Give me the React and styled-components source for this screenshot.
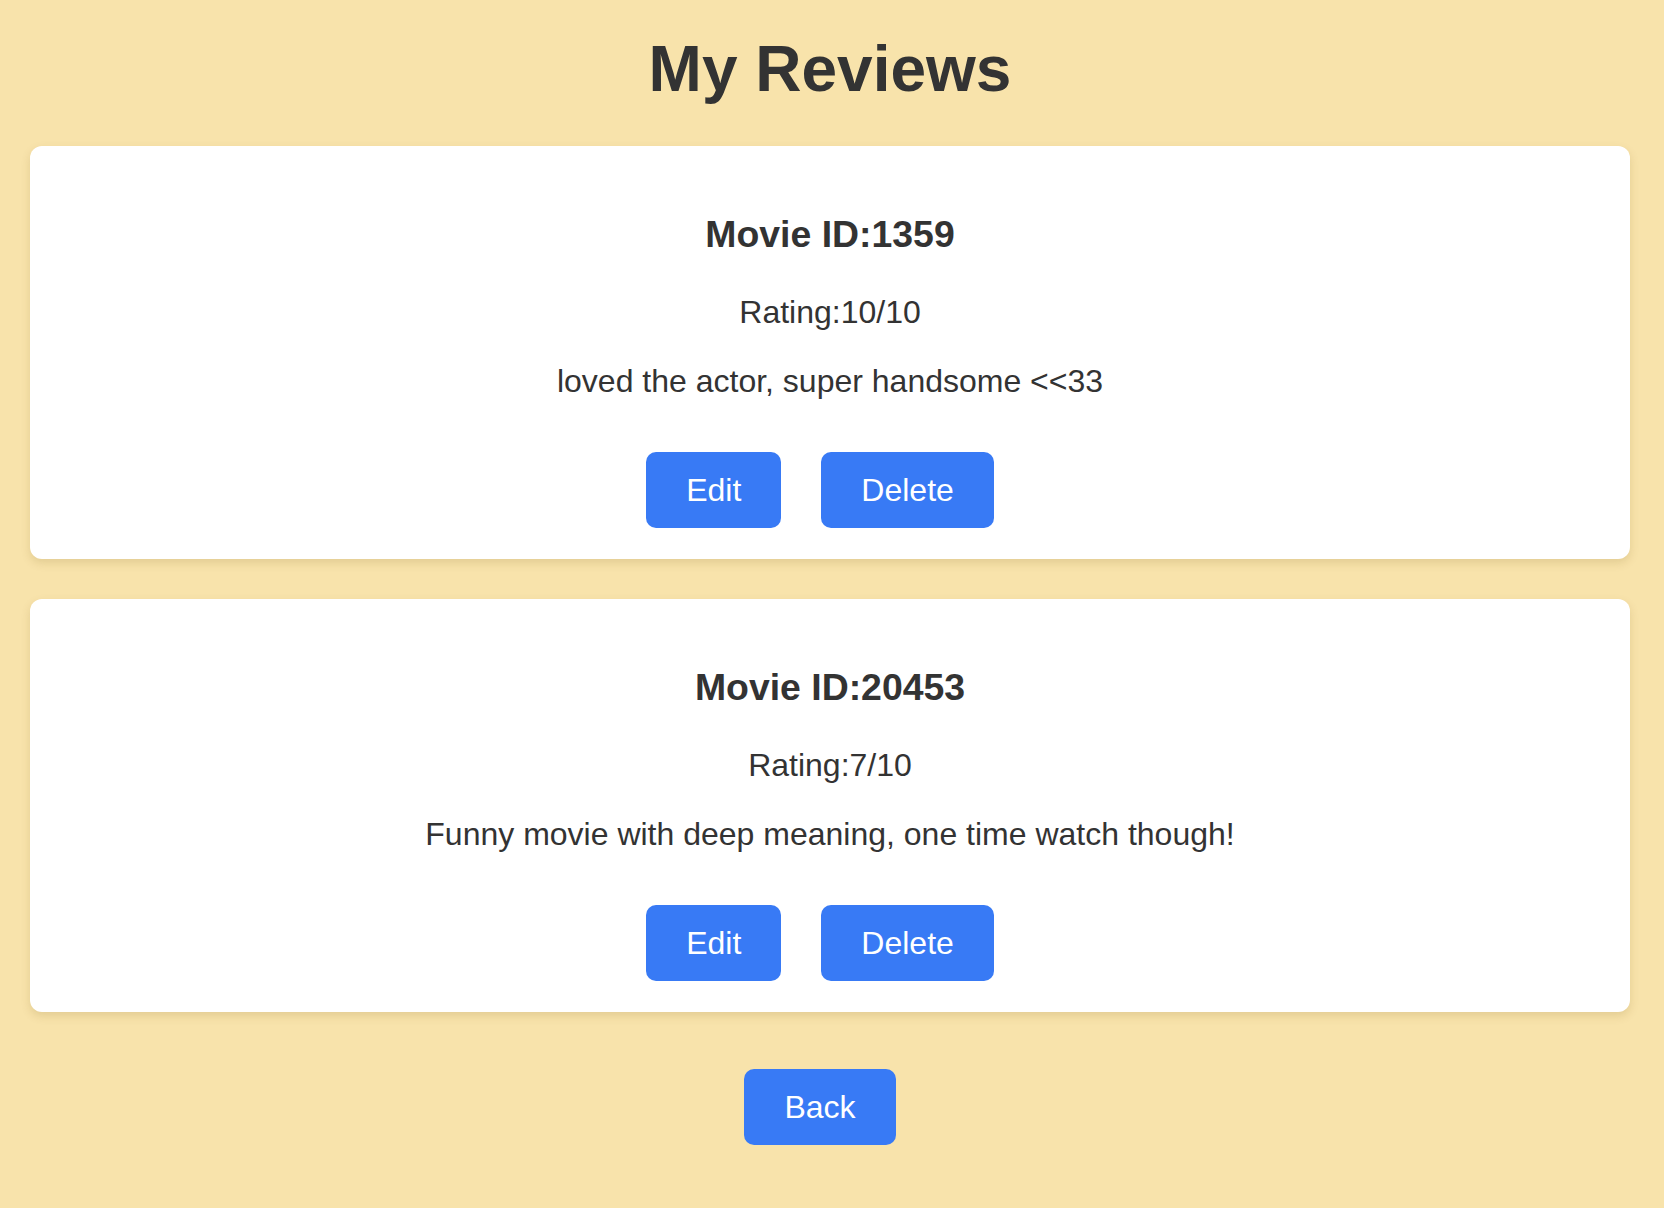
import React from "react";
import styled, { createGlobalStyle } from "styled-components";

const GlobalStyle = createGlobalStyle`
  html, body {
    margin: 0;
    padding: 0;
    background: #f8e3ab;
  }
  body {
    font-family: "Liberation Sans", Arial, Helvetica, sans-serif;
    color: #333333;
  }
  * { box-sizing: border-box; }
`;

const Page = styled.div`
  min-height: 1208px;
  padding: 32px 34px 40px 30px;
  display: flex;
  flex-direction: column;
  align-items: stretch;
`;

const Title = styled.h1`
  margin: 0 0 40px;
  font-size: 64px;
  font-weight: 700;
  text-align: center;
  color: #333333;
  line-height: normal;
`;

const List = styled.div`
  display: flex;
  flex-direction: column;
  gap: 40px;
`;

const Card = styled.div`
  background: #ffffff;
  border-radius: 12px;
  box-shadow: 0 4px 10px rgba(120, 90, 20, 0.16);
  padding: 31px 20px 31px;
  text-align: center;
`;

const MovieId = styled.h3`
  margin: 36px 0 38px;
  font-size: 37.4px;
  font-weight: 700;
  line-height: normal;
  color: #333333;
`;

const Text = styled.p`
  margin: 0 0 ${(p) => p.$gap || 0}px;
  font-size: 32px;
  line-height: normal;
  color: #333333;
`;

const ButtonRow = styled.div`
  display: flex;
  justify-content: center;
  gap: 40px;
  margin-top: ${(p) => p.$top || 0}px;
  padding-right: 20px;
`;

const Button = styled.button`
  font-family: "Liberation Sans", Arial, Helvetica, sans-serif;
  font-size: 32px;
  line-height: normal;
  color: #ffffff;
  background: #387af5;
  border: none;
  border-radius: 10px;
  padding: 19.5px 40px;
  cursor: pointer;
`;

const reviews = [
  { id: 1359, rating: 10, text: "loved the actor, super handsome <<33" },
  { id: 20453, rating: 7, text: "Funny movie with deep meaning, one time watch though!" },
];

export default function App() {
  return (
    <>
      <GlobalStyle />
      <Page>
        <Title>My Reviews</Title>
        <List>
          {reviews.map((r) => (
            <Card key={r.id}>
              <MovieId>Movie ID:{r.id}</MovieId>
              <Text $gap={32}>Rating:{r.rating}/10</Text>
              <Text>{r.text}</Text>
              <ButtonRow $top={52}>
                <Button>Edit</Button>
                <Button>Delete</Button>
              </ButtonRow>
            </Card>
          ))}
        </List>
        <ButtonRow $top={57}>
          <Button>Back</Button>
        </ButtonRow>
      </Page>
    </>
  );
}
